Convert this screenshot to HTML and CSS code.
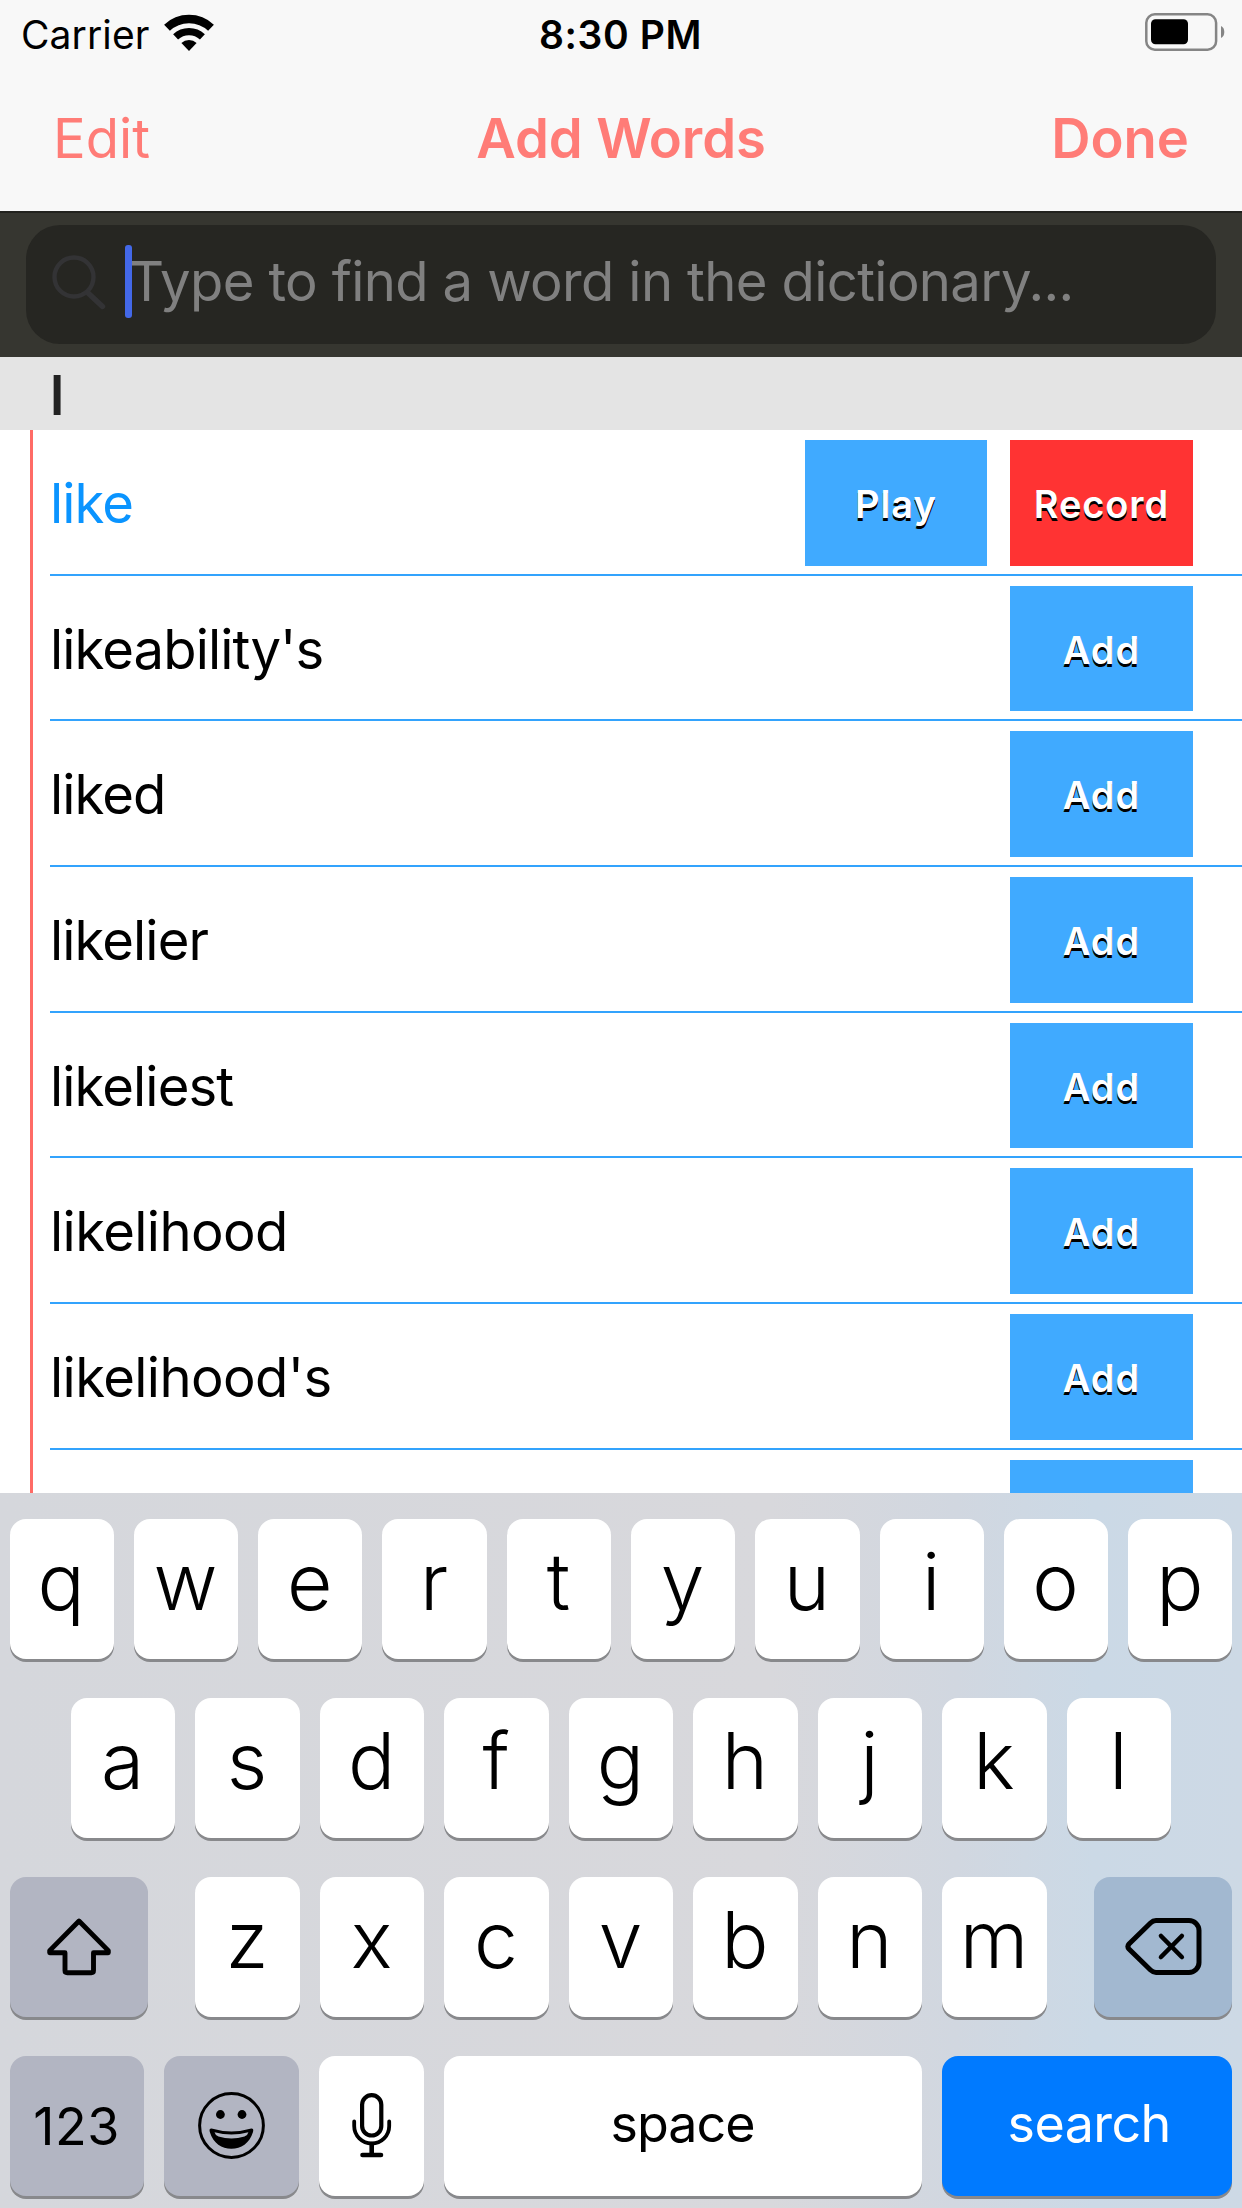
FILE: index.html
```html
<!DOCTYPE html>
<html lang="en">
<head>
    <meta charset="UTF-8">
    <meta name="viewport" content="width=device-width, initial-scale=1.0">
    <title>Add Words</title>
    <link rel="stylesheet" href="styles.css">
</head>
<body>
    <div class="status-bar">
        <div class="carrier">
            <span>Carrier</span>
            <svg class="wifi" width="50" height="38" viewBox="0 0 50 38">
                <path d="M3 13.8A32 32 0 0 1 47 13.8" fill="none" stroke="#000" stroke-width="8.4"/>
                <path d="M11.6 22.9A19.5 19.5 0 0 1 38.4 22.9" fill="none" stroke="#000" stroke-width="7.2"/>
                <path d="M25 37L17.4 29A11 11 0 0 1 32.6 29Z"/>
            </svg>
        </div>
        <div class="time">8:30 PM</div>
        <svg class="battery" width="80" height="38" viewBox="0 0 80 38">
            <rect x="1.3" y="1.3" width="69.8" height="35.4" rx="8.5" fill="none" stroke="#858585" stroke-width="2.5"/>
            <rect x="6" y="6.3" width="37" height="25" rx="4.5"/>
            <path d="M76 13Q79.3 14.5 79.3 19T76 25Z" fill="#858585"/>
        </svg>
    </div>

    <div class="nav">
        <a class="nav-link">Edit</a>
        <div class="nav-title">Add Words</div>
        <a class="nav-link bold">Done</a>
    </div>

    <div class="search-bar">
        <div class="search-field">
            <svg class="search-icon" width="54" height="55" viewBox="0 0 54 55">
                <circle cx="22" cy="22" r="19.5" fill="none" stroke="#333335" stroke-width="4.4"/>
                <path d="M35.5 37.5L50.5 51.5" stroke="#333335" stroke-width="5.4" stroke-linecap="round"/>
            </svg>
            <div class="placeholder">Type to find a word in the dictionary...<span class="caret"></span></div>
        </div>
    </div>

    <div class="section-header">l</div>

    <div class="word-list">
        <div class="row">
            <span class="word added">like</span>
            <button class="button">Play</button>
            <button class="button record">Record</button>
        </div>
        <div class="row"><span class="word">likeability's</span><button class="button">Add</button></div>
        <div class="row"><span class="word">liked</span><button class="button">Add</button></div>
        <div class="row"><span class="word">likelier</span><button class="button">Add</button></div>
        <div class="row"><span class="word">likeliest</span><button class="button">Add</button></div>
        <div class="row"><span class="word loose">likelihood</span><button class="button">Add</button></div>
        <div class="row"><span class="word loose">likelihood's</span><button class="button">Add</button></div>
        <div class="row"><span class="word"></span><button class="button"></button></div>
    </div>

    <div class="keyboard">
        <div class="keys">
            <div class="key">q</div>
            <div class="key">w</div>
            <div class="key">e</div>
            <div class="key">r</div>
            <div class="key">t</div>
            <div class="key">y</div>
            <div class="key">u</div>
            <div class="key">i</div>
            <div class="key">o</div>
            <div class="key">p</div>
        </div>
        <div class="letters">
            <div class="key">a</div>
            <div class="key">s</div>
            <div class="key">d</div>
            <div class="key">f</div>
            <div class="key">g</div>
            <div class="key">h</div>
            <div class="key">j</div>
            <div class="key">k</div>
            <div class="key">l</div>
        </div>
        <div class="keys spread">
            <div class="key dark wide">
                <svg width="66" height="60" viewBox="0 0 66 60">
                    <path d="M33 4L62.3 33.6V35.8H47.5V53.5Q47.5 55.7 45.3 55.7H21.2Q19 55.7 19 53.5V35.8H3.7V33.6Z" fill="none" stroke="#000" stroke-width="4.9" stroke-linejoin="round"/>
                </svg>
            </div>
            <div class="letters">
                <div class="key">z</div>
                <div class="key">x</div>
                <div class="key">c</div>
                <div class="key">v</div>
                <div class="key">b</div>
                <div class="key">n</div>
                <div class="key">m</div>
            </div>
            <div class="key dark blue-gray wide">
                <svg width="77" height="57" viewBox="0 0 77 57">
                    <path d="M31 2.6H64A10 10 0 0 1 74 12.6V44.4A10 10 0 0 1 64 54.4H31Q28 54.4 25.5 52L4 31Q1.8 28.5 4 26L25.5 5Q28 2.6 31 2.6Z" fill="none" stroke="#000" stroke-width="5"/>
                    <path d="M36 18L56.8 39M56.8 18L36 39" stroke="#000" stroke-width="4.6" stroke-linecap="round"/>
                </svg>
            </div>
        </div>
        <div class="keys">
            <div class="key dark numbers">123</div>
            <div class="key dark emoji">
                <svg width="67" height="67" viewBox="0 0 67 67">
                    <circle cx="33.5" cy="33.5" r="31.9" fill="none" stroke="#000" stroke-width="3"/>
                    <circle cx="22.4" cy="22.5" r="4.4"/>
                    <circle cx="44" cy="22.5" r="4.4"/>
                    <path d="M13.5 36.6Q33.4 42.5 53.3 36.6Q56 36.5 55 40C51.5 51.5 43 56.8 33.4 56.8S15.3 51.5 11.8 40Q10.8 36.5 13.5 36.6Z"/>
                    <path d="M16.5 40.2Q33.4 44.6 50.4 40.2Q49.6 43.5 46.5 44.6Q33.4 48.5 20.5 44.6Q17.4 43.5 16.5 40.2Z" fill="#b2b6c2"/>
                </svg>
            </div>
            <div class="key">
                <svg width="40" height="65" viewBox="0 0 40 65">
                    <rect x="10.1" y="2.1" width="19.2" height="40.4" rx="9.6" fill="none" stroke="#000" stroke-width="4.2"/>
                    <path d="M2.2 28.5V33A17.5 17.5 0 0 0 37.2 33V28.5" fill="none" stroke="#000" stroke-width="3.8" stroke-linecap="round"/>
                    <path d="M19.7 51V61.8M10.5 62H29" fill="none" stroke="#000" stroke-width="4.6" stroke-linecap="round"/>
                </svg>
            </div>
            <div class="key space">space</div>
            <div class="key search">search</div>
        </div>
    </div>
</body>
</html>
```
FILE: styles.css
```css
* {
    box-sizing: border-box;
}
body {
    font-family: Inter, "Liberation Sans", sans-serif;
    font-size: 54.4px;
    margin: 0;
    width: 1242px;
    height: 2208px;
    overflow: hidden;
    display: flex;
    flex-direction: column;
    background-color: #fff;
    color: #000;
}
svg {
    display: block;
}

/* status bar */
.status-bar {
    display: grid;
    grid-template-columns: 1fr auto 1fr;
    align-items: center;
    height: 68px;
    padding: 0 17px 0 21px;
    background: #f8f8f8;
    font-size: 39px;
    flex: none;
}
.carrier {
    display: flex;
    align-items: center;
    gap: 14px;
    letter-spacing: 0.1px;
}
.wifi {
    margin-bottom: 2px;
}
.time {
    font-weight: 600;
    letter-spacing: 0.6px;
    padding-right: 5px;
}
.battery {
    justify-self: end;
    margin-bottom: 4px;
}

/* navigation */
.nav {
    display: grid;
    grid-template-columns: 1fr auto 1fr;
    align-items: center;
    height: 143px;
    padding: 0 53px 4px;
    background: #f8f8f8;
    color: #ff7c77;
    flex: none;
}
.nav-title {
    font-weight: 600;
    letter-spacing: -0.1px;
}
.bold {
    font-weight: 600;
    justify-self: end;
}

/* search */
.search-bar {
    height: 146px;
    padding: 12px 26px 13px;
    background: #363630;
    border-top: 2px solid #22221e;
    flex: none;
}
.search-field {
    display: flex;
    align-items: center;
    height: 119px;
    padding: 0 0 8px 26px;
    border-radius: 34px;
    background: #262622;
}
.search-icon {
    margin-top: 4px;
}
.placeholder {
    position: relative;
    margin-left: 23px;
    color: #808080;
    letter-spacing: -0.63px;
    white-space: nowrap;
}
.caret {
    position: absolute;
    left: -4px;
    top: -3px;
    width: 7px;
    height: 73px;
    border-radius: 3px;
    background: #4368e8;
}

/* word list */
.section-header {
    height: 73px;
    padding: 4px 0 0 50px;
    line-height: 69px;
    font-weight: 600;
    color: #222;
    background: #e4e4e4;
    flex: none;
}
.word-list {
    flex: 1;
    min-height: 0;
    overflow: hidden;
    padding-left: 17px;
    margin-left: 29.5px;
    border-left: 3px solid #ff6b66;
}
.row {
    display: flex;
    align-items: center;
    gap: 23.3px;
    height: 145.7px;
    padding: 2px 49.5px 0 0.5px;
    border-bottom: 2px solid #33a3fd;
}
.word {
    flex: 1;
    letter-spacing: -0.9px;
}
.loose {
    letter-spacing: -0.6px;
}
.added {
    color: #0a94ff;
}
.button {
    width: 182.2px;
    height: 125.6px;
    padding: 2px 0 0;
    border: none;
    background: #40aaff;
    color: #fff;
    font-family: inherit;
    font-size: 38px;
    font-weight: 600;
    letter-spacing: 0.9px;
    text-shadow: 0 3px 0 #000;
}
.record {
    background: #ff3333;
}

/* keyboard */
.keyboard {
    display: flex;
    flex-direction: column;
    gap: 39.5px;
    height: 715px;
    padding: 26.2px 9.5px 0;
    background: linear-gradient(to right, #d5d7dc, #d8d8dc 62%, #d1d7e0 77%, #cbd9e6 88%, #cdd9e5);
    flex: none;
}
.keys, .letters {
    display: flex;
    justify-content: center;
    gap: 20px;
}
.letters {
    gap: 20.2px;
}
.spread {
    justify-content: space-between;
}
.key {
    display: flex;
    align-items: center;
    justify-content: center;
    width: 104.3px;
    height: 139.5px;
    padding: 0 1px 14px 0;
    border-radius: 16px;
    background: #fff;
    box-shadow: 0 3px 0 #88898c;
    font-size: 78.5px;
    font-weight: 350;
    flex: none;
}
.key:has(svg) {
    padding: 0;
}
.dark {
    background: #b2b5c2;
}
.blue-gray {
    background: #a2b8d0;
}
.wide {
    width: 138.5px;
}
.numbers, .space, .search {
    font-size: 52px;
    font-weight: 400;
}
.numbers {
    width: 133.8px;
    padding: 2px 1px 0 0;
    letter-spacing: 0.5px;
}
.emoji {
    width: 135.5px;
}
.space {
    width: 478.7px;
    padding-bottom: 5px;
    letter-spacing: -1px;
}
.search {
    width: 289.5px;
    padding: 0 0 4px 4px;
    letter-spacing: -0.6px;
    background: #007aff;
    color: #fff;
}
```
